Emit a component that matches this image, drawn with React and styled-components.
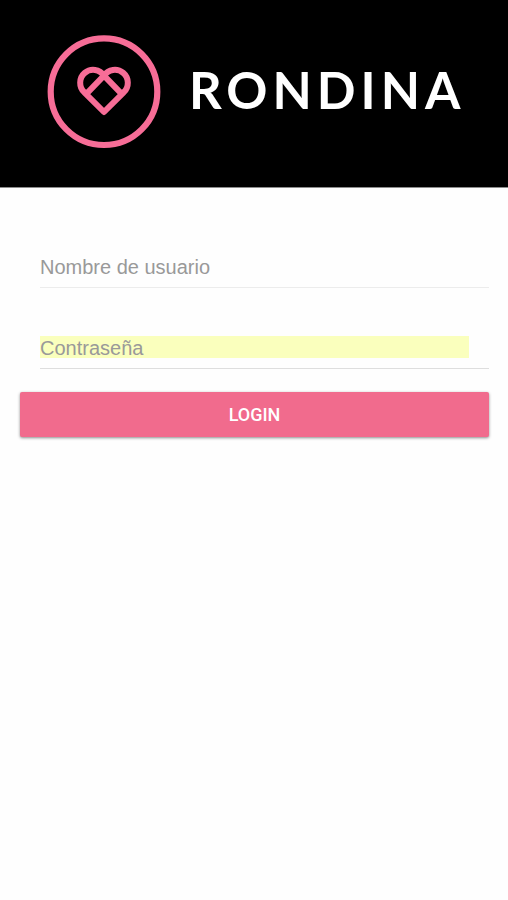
import { useState } from "react";
import styled, { createGlobalStyle } from "styled-components";

// ─── Estilos ──────────────────────────────────────────────────────────────

const GlobalStyle = createGlobalStyle`
  * {
    box-sizing: border-box;
  }

  body {
    margin: 0;
    background: #fefefe;
    font-family: "Liberation Sans", Arial, sans-serif;
  }
`;

const Header = styled.header`
  display: flex;
  align-items: center;
  gap: 28px;
  padding: 35px 20px 38px 47px;
  background: #000;
  border-bottom: 1px solid #8c8c8c;
`;

const LogoMark = styled.svg`
  flex: none;
  width: 114px;
  height: 114px;
  fill: none;
  stroke: #f76d97;
  stroke-linecap: round;
  stroke-linejoin: round;
`;

const Brand = styled.h1`
  margin: 0;
  padding-bottom: 4px;
  color: #fff;
  font-family: Lato, sans-serif;
  font-size: 51px;
  font-weight: 700;
  line-height: 60px;
  letter-spacing: 5px;
`;

const Form = styled.form`
  display: flex;
  flex-direction: column;
  padding: 43px 19px 20px 20px;
`;

const Field = styled.div`
  margin-left: 20px;
  padding: 24px 20px 10px 0;
  margin-top: ${(p) => (p.$spaced ? "24px" : "0")};
  border-bottom: 1px solid ${(p) => (p.$spaced ? "#dedede" : "#ececec")};
`;

const Input = styled.input`
  display: block;
  width: 100%;
  height: 22px;
  padding: 2px 0 0;
  border: 0;
  outline: 0;
  background: ${(p) => (p.$filled ? "#faffbd" : "transparent")};
  color: #222;
  font-family: inherit;
  font-size: 20px;
  line-height: 20px;

  &::placeholder {
    color: #999;
    opacity: 1;
  }
`;

const LoginBtn = styled.button`
  height: 45px;
  margin-top: 23px;
  border: 0;
  border-radius: 2px;
  background: #f16b8d;
  box-shadow: 0 1px 3px rgba(0, 0, 0, 0.45);
  color: #fff;
  font-family: Roboto, sans-serif;
  font-size: 18px;
  font-weight: 500;
  cursor: pointer;

  &:active {
    background: #dd6281;
  }
`;

// ─── Componentes ──────────────────────────────────────────────────────────

function Logo() {
  return (
    <LogoMark viewBox="0 0 114 114" aria-hidden="true">
      <circle cx="57" cy="56.7" r="53.3" strokeWidth="6.2" />
      <path
        strokeWidth="6"
        d="M39.6 58.6 57 40.6 A13 13 0 1 0 37.3 57.3 L57 77 76.7 57.3 A13 13 0 1 0 57 40.6 L74.4 58.6"
      />
    </LogoMark>
  );
}

export default function App() {
  const [user, setUser] = useState("");
  const [password, setPassword] = useState("");

  return (
    <>
      <GlobalStyle />
      <Header>
        <Logo />
        <Brand>RONDINA</Brand>
      </Header>
      <main>
        <Form onSubmit={(e) => e.preventDefault()}>
          <Field>
            <Input
              type="text"
              aria-label="Nombre de usuario"
              placeholder="Nombre de usuario"
              value={user}
              onChange={(e) => setUser(e.target.value)}
            />
          </Field>
          <Field $spaced>
            <Input
              $filled
              type="password"
              aria-label="Contraseña"
              placeholder="Contraseña"
              value={password}
              onChange={(e) => setPassword(e.target.value)}
            />
          </Field>
          <LoginBtn type="submit">LOGIN</LoginBtn>
        </Form>
      </main>
    </>
  );
}
